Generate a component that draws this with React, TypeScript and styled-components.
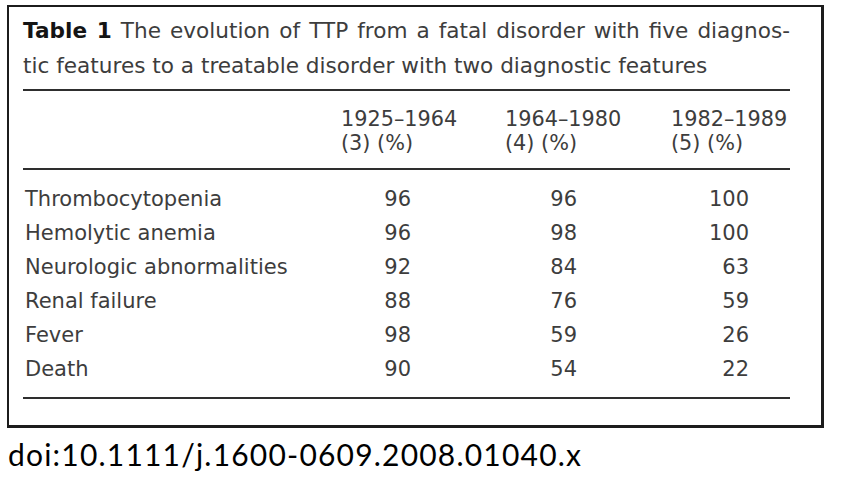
import React from "react";
import styled, { createGlobalStyle } from "styled-components";

const Global = createGlobalStyle`
  html, body { margin: 0; padding: 0; background: #ffffff; }
`;

const Page = styled.div`
  padding: 5px 0 0 7px;
  width: 851px;
  height: 504px;
  box-sizing: border-box;
  overflow: hidden;
`;

const Frame = styled.div`
  width: 817px;
  box-sizing: border-box;
  border-style: solid;
  border-color: #1c1c1c;
  border-width: 2px 3px 3px 2px;
  padding: 6px 31px 26px 14px;
  font-family: "DejaVu Sans", "Liberation Sans", sans-serif;
  font-size: 21px;
  color: #3d3d3d;
`;

const Caption = styled.div`
  font-size: 21.6px;
  line-height: 35px;
  margin-bottom: 6px;
`;

const CaptionLine = styled.div<{ $justify?: boolean }>`
  text-align: ${(p) => (p.$justify ? "justify" : "left")};
  text-align-last: ${(p) => (p.$justify ? "justify" : "left")};
  white-space: ${(p) => (p.$justify ? "normal" : "nowrap")};
`;

const Label = styled.b`
  color: #141414;
  font-weight: bold;
`;

const Rule = styled.div`
  height: 2px;
  background: #2e2e2e;
`;

const Grid = styled.div<{ $lh: number; $pt: number; $pb: number }>`
  display: grid;
  grid-template-columns: 318px 164px 166px 1fr;
  line-height: ${(p) => p.$lh}px;
  padding: ${(p) => p.$pt}px 0 ${(p) => p.$pb}px;
`;

const HeadCell = styled.div`
  white-space: nowrap;
  font-size: 20.8px;
`;

const RowLabel = styled.div`
  white-space: nowrap;
  padding-left: 2px;
`;

const Num = styled.div<{ $pr: number }>`
  text-align: right;
  padding-right: ${(p) => p.$pr}px;
`;

const Doi = styled.div`
  margin-top: 8px;
  font-family: Lato, "Open Sans", sans-serif;
  font-size: 30px;
  letter-spacing: 1.2px;
  color: #000;
  padding-left: 1px;
`;

const rows: [string, number, number, number][] = [
  ["Thrombocytopenia", 96, 96, 100],
  ["Hemolytic anemia", 96, 98, 100],
  ["Neurologic abnormalities", 92, 84, 63],
  ["Renal failure", 88, 76, 59],
  ["Fever", 98, 59, 26],
  ["Death", 90, 54, 22],
];

export default function App() {
  return (
    <Page>
      <Global />
      <Frame>
        <Caption>
          <CaptionLine $justify>
            <Label>Table 1</Label> The evolution of TTP from a fatal disorder with five diagnos-
          </CaptionLine>
          <CaptionLine>tic features to a treatable disorder with two diagnostic features</CaptionLine>
        </Caption>
        <Rule />
        <Grid $lh={24} $pt={16} $pb={13}>
          <HeadCell />
          <HeadCell>
            1925–1964
            <br />
            (3) (%)
          </HeadCell>
          <HeadCell>
            1964–1980
            <br />
            (4) (%)
          </HeadCell>
          <HeadCell>
            1982–1989
            <br />
            (5) (%)
          </HeadCell>
        </Grid>
        <Rule />
        <Grid $lh={34} $pt={12} $pb={11}>
          {rows.map(([name, a, b, c]) => (
            <React.Fragment key={name}>
              <RowLabel>{name}</RowLabel>
              <Num $pr={94}>{a}</Num>
              <Num $pr={94}>{b}</Num>
              <Num $pr={41}>{c}</Num>
            </React.Fragment>
          ))}
        </Grid>
        <Rule />
      </Frame>
      <Doi>doi:10.1111/j.1600-0609.2008.01040.x</Doi>
    </Page>
  );
}
